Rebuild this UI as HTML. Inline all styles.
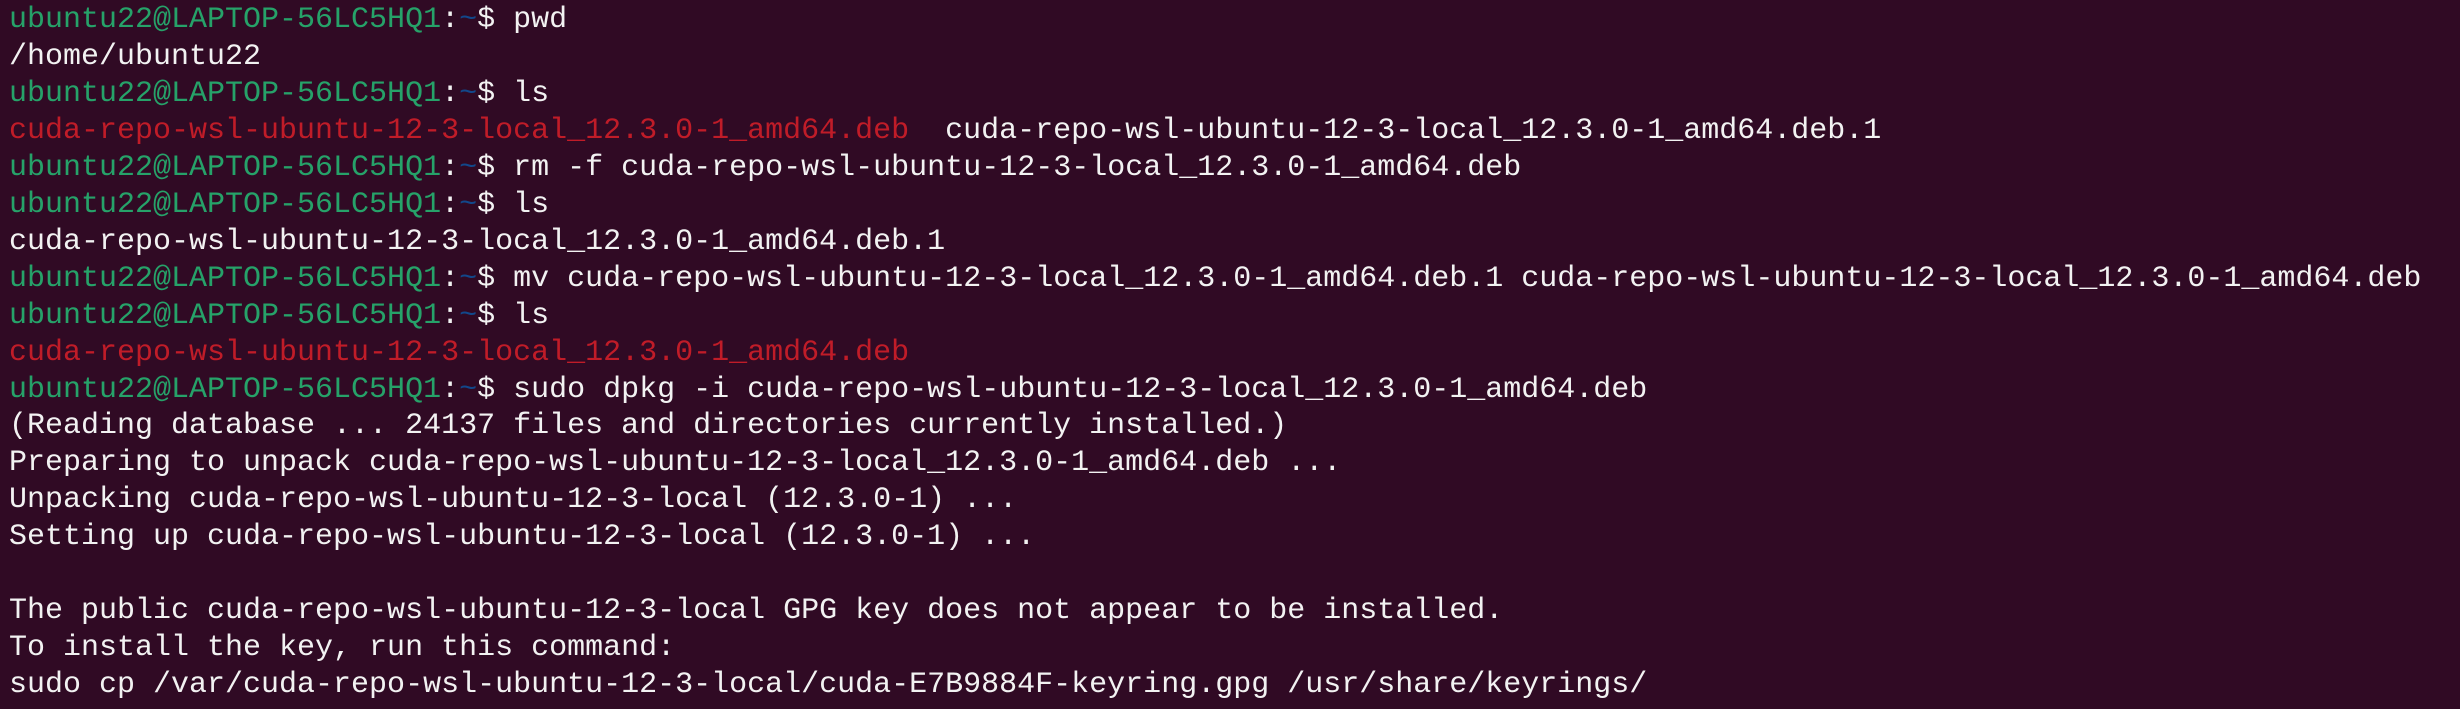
<!DOCTYPE html>
<html><head><meta charset="utf-8"><style>
html,body{margin:0;padding:0;background:#300a24;width:2460px;height:709px;overflow:hidden}
pre{margin:0;padding:2px 0 0 9px;font-family:"Liberation Mono",monospace;font-size:30px;line-height:36.95px;color:#f2f2f2;white-space:pre}
.g{color:#26a269}.b{color:#12488b}.r{color:#c01c28}
</style></head><body><pre><span class="g">ubuntu22@LAPTOP-56LC5HQ1</span>:<span class="b">~</span>$ pwd
/home/ubuntu22
<span class="g">ubuntu22@LAPTOP-56LC5HQ1</span>:<span class="b">~</span>$ ls
<span class="r">cuda-repo-wsl-ubuntu-12-3-local_12.3.0-1_amd64.deb</span>  cuda-repo-wsl-ubuntu-12-3-local_12.3.0-1_amd64.deb.1
<span class="g">ubuntu22@LAPTOP-56LC5HQ1</span>:<span class="b">~</span>$ rm -f cuda-repo-wsl-ubuntu-12-3-local_12.3.0-1_amd64.deb
<span class="g">ubuntu22@LAPTOP-56LC5HQ1</span>:<span class="b">~</span>$ ls
cuda-repo-wsl-ubuntu-12-3-local_12.3.0-1_amd64.deb.1
<span class="g">ubuntu22@LAPTOP-56LC5HQ1</span>:<span class="b">~</span>$ mv cuda-repo-wsl-ubuntu-12-3-local_12.3.0-1_amd64.deb.1 cuda-repo-wsl-ubuntu-12-3-local_12.3.0-1_amd64.deb
<span class="g">ubuntu22@LAPTOP-56LC5HQ1</span>:<span class="b">~</span>$ ls
<span class="r">cuda-repo-wsl-ubuntu-12-3-local_12.3.0-1_amd64.deb</span>
<span class="g">ubuntu22@LAPTOP-56LC5HQ1</span>:<span class="b">~</span>$ sudo dpkg -i cuda-repo-wsl-ubuntu-12-3-local_12.3.0-1_amd64.deb
(Reading database ... 24137 files and directories currently installed.)
Preparing to unpack cuda-repo-wsl-ubuntu-12-3-local_12.3.0-1_amd64.deb ...
Unpacking cuda-repo-wsl-ubuntu-12-3-local (12.3.0-1) ...
Setting up cuda-repo-wsl-ubuntu-12-3-local (12.3.0-1) ...

The public cuda-repo-wsl-ubuntu-12-3-local GPG key does not appear to be installed.
To install the key, run this command:
sudo cp /var/cuda-repo-wsl-ubuntu-12-3-local/cuda-E7B9884F-keyring.gpg /usr/share/keyrings/
</pre></body></html>
